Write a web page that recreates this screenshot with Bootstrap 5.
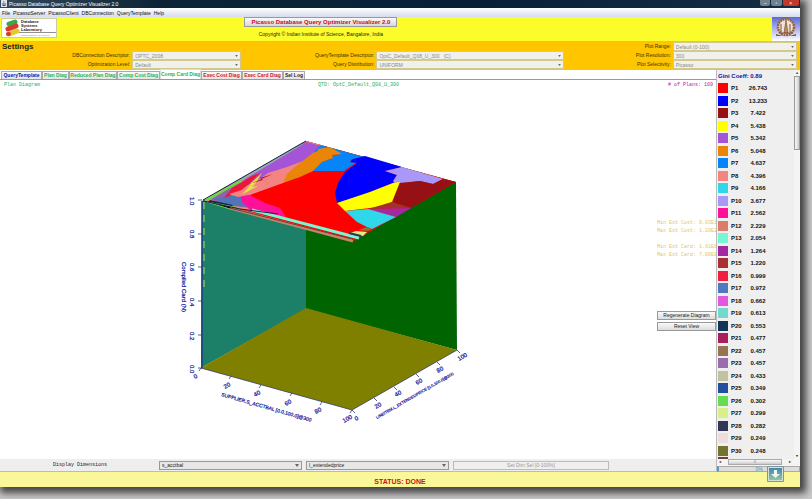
<!DOCTYPE html>
<html lang="en">
<head>
<meta charset="utf-8">
<meta name="viewport" content="width=device-width, initial-scale=1">
<title>Picasso Database Query Optimizer Visualizer 2.0</title>
<link href="https://cdn.jsdelivr.net/npm/bootstrap@5.3.0/dist/css/bootstrap.min.css" rel="stylesheet">
<style>
body{background:#c9c9c9;font:5px/8px "Liberation Sans",Arial,sans-serif;color:#222;overflow:hidden}
.app{min-height:calc(100vh - 12px);margin:0 12px 12px 0;background:#fff;box-shadow:3px 3px 7px 3px #444}
button,select{font:inherit;color:inherit}
.titlebar{height:8px;background:linear-gradient(90deg,#33495b,#0d2437 20%,#0a2038 60%,#152d42);color:#fff}
.cup{width:6px;height:7px;margin:0 2px 0 1px}
.winbtns{width:39px;margin-right:1px;gap:1px;height:6px}
.winbtns button{flex:1;border:0;padding:0;border-radius:0 0 2px 2px;background:#72818e;color:#fff;line-height:5px}
.winbtns button:last-child{flex:1.6;background:#c0392b}
.menubar{height:9px;background:linear-gradient(#fff,#d5dcee);gap:3px;padding:1px 2px}
.menubar a{color:#111;text-decoration:none}
.banner{height:24px;background:#fcfc2a;display:grid;grid-template-columns:58px 525fr 188fr 28px}
.banner span{line-height:7px}
.logo{width:56px;height:20px;margin:1px}
.emblem{width:28px;height:24px;grid-column:4}
.apptitle{border:1px solid #999;background:linear-gradient(#fafafa,#d8d8d8);color:#cc0c20;font-weight:bold;font-size:6px;line-height:8px;padding:0;width:153px}
.settings{display:grid;grid-template-columns:131fr 111fr 133fr 189fr 107fr 126fr 2fr;grid-template-rows:repeat(3,9px);background:#ffc600;height:29px;padding-top:1px}
.settings label{text-align:right;padding-right:1px;line-height:9px;color:#3f3100}
.settings h1{font-size:8px;font-weight:bold;line-height:9px;margin:0;padding-left:2px;color:#222;grid-column:1 / 5}
select{appearance:none;border:1px solid #aaa;border-radius:0;padding:0 2px;line-height:6px;height:9px;min-width:0;opacity:1;background:#f1f1ec url("data:image/svg+xml,%3Csvg xmlns='http://www.w3.org/2000/svg' viewBox='0 0 4 3'%3E%3Cpath d='M0 0h4L2 3z' fill='%23666'/%3E%3C/svg%3E") right 2px center/4px 3px no-repeat;color:#222}
.settings select{margin:0 1px;border-color:#d5c88c;color:#888;background-size:3px 2px}
.tabs{height:10px;border-bottom:1px solid #999;padding-left:1px;align-items:flex-end}
.tabs button{border:1px solid #aaa;border-bottom:0;background:linear-gradient(#fafafa,#e3e3e3);font-weight:bold;height:8px;line-height:7px;padding:0;white-space:nowrap;color:#24b35c}
.tabs .on{background:#fff;height:10px;border-color:#ddd}
.tabs .cr{color:#d01622}.tabs .cb{color:#1212b0}.tabs .ck{color:#401818}
.w27{width:27px}.w41{width:41px}.w43{width:43px}.w48{width:48px}.w22{width:22px}
.mono{font-family:"Liberation Mono",monospace}
.caption-row{height:12px;padding:1px 3px 0 4px;color:#24b35c;display:grid;grid-template-columns:1fr auto 1fr}
.plans-count{color:#b517a8;text-align:right}
.plot{width:320px;height:300px;margin:38px 0 0 160px}
.plot text{font-family:"Liberation Sans",Arial,sans-serif;fill:#11119a;stroke:#11119a;stroke-width:.2}
.side{width:59px;margin-top:127px;color:#e3c65a;white-space:nowrap}
.side p{margin:0;overflow:hidden}
.side .gap-below{margin-bottom:8px}
.side button{display:block;width:100%;height:9px;border:1px solid #999;background:linear-gradient(#fafafa,#dcdcdc);padding:0;line-height:7px;color:#222;margin-bottom:2px}
.side .first{margin-top:52px}
.dims{height:13px;background:#eee;border-bottom:1px solid #bbb;padding-left:53px;padding-right:107px}
.dims select{background-color:#e7e7e7;border-color:#999;width:143px}
.dims button{border:1px solid #bbb;background:#efefef;color:#999;height:9px;line-height:7px;padding:0;width:156px}
.legend{width:84px;background:#efefef;border-left:1px solid #bbb;font-size:6px;font-weight:bold;color:#111}
.legend h2{font-size:6px;line-height:12px;font-weight:bold;color:#1212a0;margin:0;padding-left:1px}
.legend table{border-collapse:collapse;width:100%}
.legend tr{height:12px}.legend tr:nth-child(even){height:13px}
.legend td{padding:0;line-height:10px}
.legend td:first-child{width:14px;padding-left:1px}
.legend td:nth-child(2){width:17px}
.legend td:nth-child(3){width:20px;text-align:center}
.legend svg{display:block;width:10px;height:10px}
.cut{width:10px;height:2px;background:#70403c;margin-left:1px}
.vbar{width:6px;background:#f4f4f4;font-size:4px;line-height:6px;text-align:center;color:#444}
.vthumb{height:74px;border:1px solid #999;background:linear-gradient(90deg,#fafafa,#ccc)}
.hbar{height:7px;background:#f4f4f4;padding:0 2px;font-size:4px;line-height:6px;color:#444}
.hthumb{width:54px;height:6px;border:1px solid #aaa;background:linear-gradient(#fafafa,#ccc);line-height:4px;text-align:center}
.meter{height:6px;border:1px solid #aaa;border-left:2px solid #4c9ad8;background:#ddd;color:#3c8fd6;font-size:5px;line-height:4px;text-align:center;font-weight:normal}
.status{height:15px;background:#faf79a;color:#c4160c;font-size:7px;font-weight:bold;line-height:19px;text-align:center;overflow:hidden}
.download{position:absolute;right:16px;bottom:5px;width:17px;height:16px;padding:0;border:0;background:none;display:flex}
</style>
<script src="https://cdn.jsdelivr.net/npm/bootstrap@5.3.0/dist/js/bootstrap.bundle.min.js"></script>
</head>
<body>
<div class="app d-flex flex-column position-relative">
  <header>
    <div class="titlebar d-flex">
      <svg class="cup" viewBox="0 0 6 7"><path d="M0 0h6v7H0z" fill="#dce4ea"/><path d="M3 1q-1 1 0 2" stroke="#d33" fill="none" stroke-width=".7"/><path d="M1 4h4M1.500 5.500h3" stroke="#357"/></svg>
      <span>Picasso Database Query Optimizer Visualizer 2.0</span>
      <div class="winbtns d-flex ms-auto"><button aria-label="Minimize">–</button><button aria-label="Restore">▫</button><button aria-label="Close">×</button></div>
    </div>
    <nav class="menubar d-flex"><a href="#">File</a><a href="#">PicassoServer</a><a href="#">PicassoClient</a><a href="#">DBConnection</a><a href="#">QueryTemplate</a><a href="#">Help</a></nav>
    <div class="banner">
      <svg class="logo" viewBox="0 0 56 20"><path d="M.5 .5h55v19H.5z" fill="#fff" stroke="#aaa" stroke-width=".6"/><g stroke-linecap="round" stroke-width="5"><path d="M8 6l6-2" stroke="#37a84c"/><path d="M8 16l8-3" stroke="#e3c92c"/><path d="M7 11l8-3" stroke="#d93a2a"/><path d="M7 16l1 0" stroke="#d93a2a" stroke-width="4"/></g><g font-family="Liberation Sans" font-size="4" font-weight="bold" fill="#222"><text x="20" y="5">Database</text><text x="20" y="9">Systems</text><text x="20" y="13">Laboratory</text></g><path d="M18 14.500h37" stroke="#222" stroke-width=".5"/><text x="20" y="18" font-family="Liberation Sans" font-size="2.500" fill="#c96842">Indian Institute of Science</text></svg>
      <div class="d-flex flex-column align-items-center"><button class="apptitle">Picasso Database Query Optimizer Visualizer 2.0</button><span class="pt-1">Copyright © Indian Institute of Science, Bangalore, India</span></div>
      <svg class="emblem" viewBox="0 0 28 24"><defs><linearGradient id="sky" x2="0" y2="1"><stop stop-color="#5b68d8"/><stop offset="1" stop-color="#fff"/></linearGradient></defs><path d="M0 0h28v24H0z" fill="url(#sky)"/><circle cx="14" cy="10" r="8" fill="#f3e4d8" stroke="#946440" stroke-width="2.500" stroke-dasharray="2 .6"/><path d="M14 3l2 13h-4z" fill="#ba8c60" stroke="#6e4730" stroke-width=".6"/><path d="M9 7v8m9-8v8M7 16h14" stroke="#7b5137"/><path d="M4 17q10 4 20 0v2H4z" fill="#8b593d"/></svg>
    </div>
    <form class="settings">
      <h1>Settings</h1><label for="range">Plot Range:</label><select id="range" disabled><option>Default (0-100)</option></select><span></span>
      <label for="db">DBConnection Descriptor:</label><select id="db" disabled><option>OPTC_2008</option></select><label for="qt">QueryTemplate Descriptor:</label><select id="qt" disabled><option>OptC_Default_Q08_U_300 &nbsp; (C)</option></select><label for="res">Plot Resolution:</label><select id="res" disabled><option>300</option></select><span></span>
      <label for="opt">Optimization Level:</label><select id="opt" disabled><option>Default</option></select><label for="dist">Query Distribution:</label><select id="dist" disabled><option>UNIFORM</option></select><label for="sel">Plot Selectivity:</label><select id="sel" disabled><option>Picasso</option></select><span></span>
    </form>
  </header>
  <div class="d-flex flex-grow-1">
    <main class="flex-grow-1 d-flex flex-column">
      <div class="tabs d-flex"><button class="cb w41">QueryTemplate</button><button class="w27">Plan Diag</button><button class="w48">Reduced Plan Diag</button><button class="w43">Comp Cost Diag</button><button class="on w41">Comp Card Diag</button><button class="cr w41">Exec Cost Diag</button><button class="cr w41">Exec Card Diag</button><button class="ck w22">Sel Log</button></div>
      <div class="caption-row mono"><span>Plan Diagram</span><span>QTD: OptC_Default_Q08_U_300</span><span class="plans-count"># of Plans: 109</span></div>
      <div class="d-flex flex-grow-1 justify-content-between">
        <svg class="plot" viewBox="160 130 320 300" role="img" aria-label="Compiled cardinality surface">
          <path d="M306 141L456 182 457 350 306 309z" fill="#006400"/>
          <path d="M202 201L306 141V309L201 368z" fill="#1c8068"/>
          <path d="M306 308L457 350 352 410 201 368z" fill="#808000"/>
          <path d="M203 200L306 141 456 182 352 242z" fill="#f00"/>
          <path d="M204 200L306 141 325 146 310 160 283 183 247 196 240 203 251 206 285 217 250 211z" fill="#f48482"/>
          <path d="M303 143L307 142 325 147 313 153 303 161 287 167 268 173 261 178 247 186 239 185 246 178z" fill="#a554d8"/>
          <path d="M320 145L364 157 350 160 356 163 348 168 344 171H313L322 162 333 158 332 155 342 154 326 149 313 153z" fill="#0685fa"/>
          <path d="M330 147L342 154 332 155 333 158 322 162 313 171 300 177 283 183 287 174 297 165 303 161 313 153 318 151 318 149z" fill="#e98608"/>
          <path d="M365 156L402 167 385 171 397 175 393 183 370 192 350 199 337 203 335 193 338 183 345 172 357 163 350 162 353 159z" fill="#00f"/>
          <path d="M402 167L443 179 433 184 420 181 396 184 393 181 397 175 385 171z" fill="#aa98f8"/>
          <path d="M443 179L456 182 411 208 392 202 399 183 420 181 433 184z" fill="#961014"/>
          <path d="M337 203L370 192 393 183 400 182 392 202 378 207 345 211z" fill="#ff0"/>
          <path d="M392 202L411 208 368 209z" fill="#a3302c"/><path d="M411 208L396 217 368 209z" fill="#a229a0"/>
          <path d="M345 211L368 209 396 217 372 229 367 227 357 222z" fill="#30d6ea"/>
          <path d="M367 227L372 229 368 231 358 230z" fill="#8a7134"/><path d="M356 231L367 232 363 236 350 233z" fill="#e3e98a"/>
          <path d="M210 199L231 186 241 182 231 196 240 205 250 208 225 205z" fill="#8f62ae"/>
          <path d="M213 199L240 194 248 207 229 205z" fill="#5275b9"/>
          <path d="M240 194L250 195 265 203 280 208 286 217 250 210 242 202z" fill="#ff1098"/>
          <path d="M224 198L232 188 252 176 260 173 248 185 238 193z" fill="#ef1738"/>
          <path d="M229 194L242 190 248 185 265 180 270 186 248 195 238 197z" fill="#f48482"/>
          <path d="M242 194L248 188 251 183 262 173 255 184 252 187 258 186 247 192z" fill="#e7de43"/>
          <path d="M252 183L273 174 260 178 274 187 263 180z" fill="#a21941"/>
          <path d="M208 200L300 145" stroke="#bd9a8e" stroke-width="2"/><path d="M205 201L303 143" stroke="#82b6bd" stroke-width="1.500"/><path d="M203 200L306 141" stroke="#132948"/>
          <path d="M206 200L241 181" stroke="#69d845" stroke-width="2"/>
          <path d="M210 200L233 205 230 208 208 202z" fill="#132948"/>
          <path d="M207 202L240 208 230 209z" stroke="#69d845"/>
          <path d="M230 208L353 241" stroke="#be8767" stroke-width="3"/><path d="M252 210L359 238" stroke="#78f6d3" stroke-width="3"/><path d="M230 208L356 240" stroke="#713d39"/><path d="M203 201L240 209 278 214" stroke="#182247" fill="none"/><path d="M349 233L361 236" stroke="#203c57" stroke-width="2"/>
          <path d="M202 201V368" stroke="#173c86" stroke-width="1.500"/><path d="M204 202V292" stroke="#b9d95c" stroke-dasharray="7 6"/>
          <path d="M201 368L352 410 457 350M198 200h4M198 234h4M198 267h4M198 301h4M198 335h4M198 368h4M201 368l-2 3M231 376l-2 3M261 385l-2 3M292 393l-2 3M322 402l-2 3M352 410l-2 3M352 410l3 3M374 398l3 3M394 387l3 3M416 374l3 3M437 362l3 3M457 350l3 3" fill="none" stroke="#333b70" stroke-width=".8"/>
          <g font-size="6"><text transform="translate(190 197)rotate(90)">1.0</text><text transform="translate(190 230)rotate(90)">0.8</text><text transform="translate(190 263)rotate(90)">0.6</text><text transform="translate(190 298)rotate(90)">0.4</text><text transform="translate(190 332)rotate(90)">0.2</text><text transform="translate(190 365)rotate(90)">0.0</text><text transform="translate(182 262)rotate(90)">Compiled Card (N)</text>
          <text transform="translate(195 379)rotate(-30)">0</text><text transform="translate(225 389)rotate(-30)">20</text><text transform="translate(255 397)rotate(-30)">40</text><text transform="translate(286 406)rotate(-30)">60</text><text transform="translate(316 414)rotate(-30)">80</text><text transform="translate(344 423)rotate(-30)">100</text>
          <text transform="translate(356 421)rotate(-30)">0</text><text transform="translate(376 409)rotate(-30)">20</text><text transform="translate(396 397)rotate(-30)">40</text><text transform="translate(417 385)rotate(-30)">60</text><text transform="translate(438 373)rotate(-30)">80</text><text transform="translate(459 361)rotate(-30)">100</text></g>
          <text font-size="5" transform="translate(221 396)rotate(16)">SUPPLIER.S_ACCTBAL [0.0,100.0]@300</text>
          <text font-size="4" transform="translate(377 419)rotate(-30)">LINEITEM.L_EXTENDEDPRICE [0.0,100.0]@300</text>
        </svg>
        <aside class="side">
          <p class="mono">Min Est Cost: 9.03E1</p><p class="mono gap-below">Max Est Cost: 1.20E2</p><p class="mono">Min Est Card: 1.61E0</p><p class="mono">Max Est Card: 7.00E0</p>
          <button class="first">Regenerate Diagram</button><button>Reset View</button>
        </aside>
      </div>
      <div class="dims d-flex align-items-center justify-content-between"><span class="mono">Display Dimensions</span><div class="d-flex gap-1"><select aria-label="First dimension"><option>s_acctbal</option></select><select aria-label="Second dimension"><option>l_extendedprice</option></select><button disabled>Set Dim Sel [0-100%]</button></div></div>
    </main>
    <aside class="legend d-flex flex-column">
      <div class="d-flex flex-grow-1">
        <div class="flex-grow-1"><h2>Gini Coeff: 0.89</h2><table><tbody id="plans"></tbody></table><div class="cut"></div></div>
        <div class="vbar d-flex flex-column"><span>▴</span><div class="vthumb"></div><span class="mt-auto">▾</span></div>
      </div>
      <div class="hbar d-flex justify-content-between"><span>◂</span><div class="hthumb">≡</div><span>▸</span><span></span></div>
      <div class="meter">0%</div>
    </aside>
  </div>
  <footer class="status">STATUS: DONE</footer>
  <button class="download" aria-label="Download"><svg width="17" height="16" viewBox="0 0 17 16"><defs><linearGradient id="dl" x2="0" y2="1"><stop stop-color="#4d83a5"/><stop offset="1" stop-color="#8cc7a2"/></linearGradient></defs><path d="M.5 .5h16v15H.5z" fill="#d3e1d4" stroke="#7d96a1"/><path d="M2 2h13v12H2z" fill="url(#dl)"/><path d="M7 4h3v4h3l-4.500 4L4 8h3z" fill="#eef7f2"/></svg></button>
</div>
<script>
const values="26.743 13.233 7.422 5.438 5.342 5.048 4.637 4.396 4.166 3.677 2.562 2.229 2.054 1.264 1.220 0.999 0.972 0.662 0.613 0.553 0.477 0.457 0.457 0.433 0.349 0.302 0.299 0.282 0.249 0.248".split(" ");
const colors="ff0000 0000ff 961014 ffff00 a554d8 e98608 0685fa f48482 30d6ea aa98f8 ff1098 dc7b6b 78f6d3 a229a0 a83034 ef1f42 5078c0 e457e2 73d9cf 123456 a91e5b 967552 986fac c2c2a0 244f9e 65dc51 d9ef88 333654 eddddd 73732e".split(" ");
document.getElementById("plans").innerHTML=values.map((v,i)=>`<tr><td><svg viewBox="0 0 10 10"><rect width="10" height="10" fill="#${colors[i]}"/></svg></td><td>P${i+1}</td><td>${v}</td><td></td></tr>`).join("");
</script>
</body>
</html>
